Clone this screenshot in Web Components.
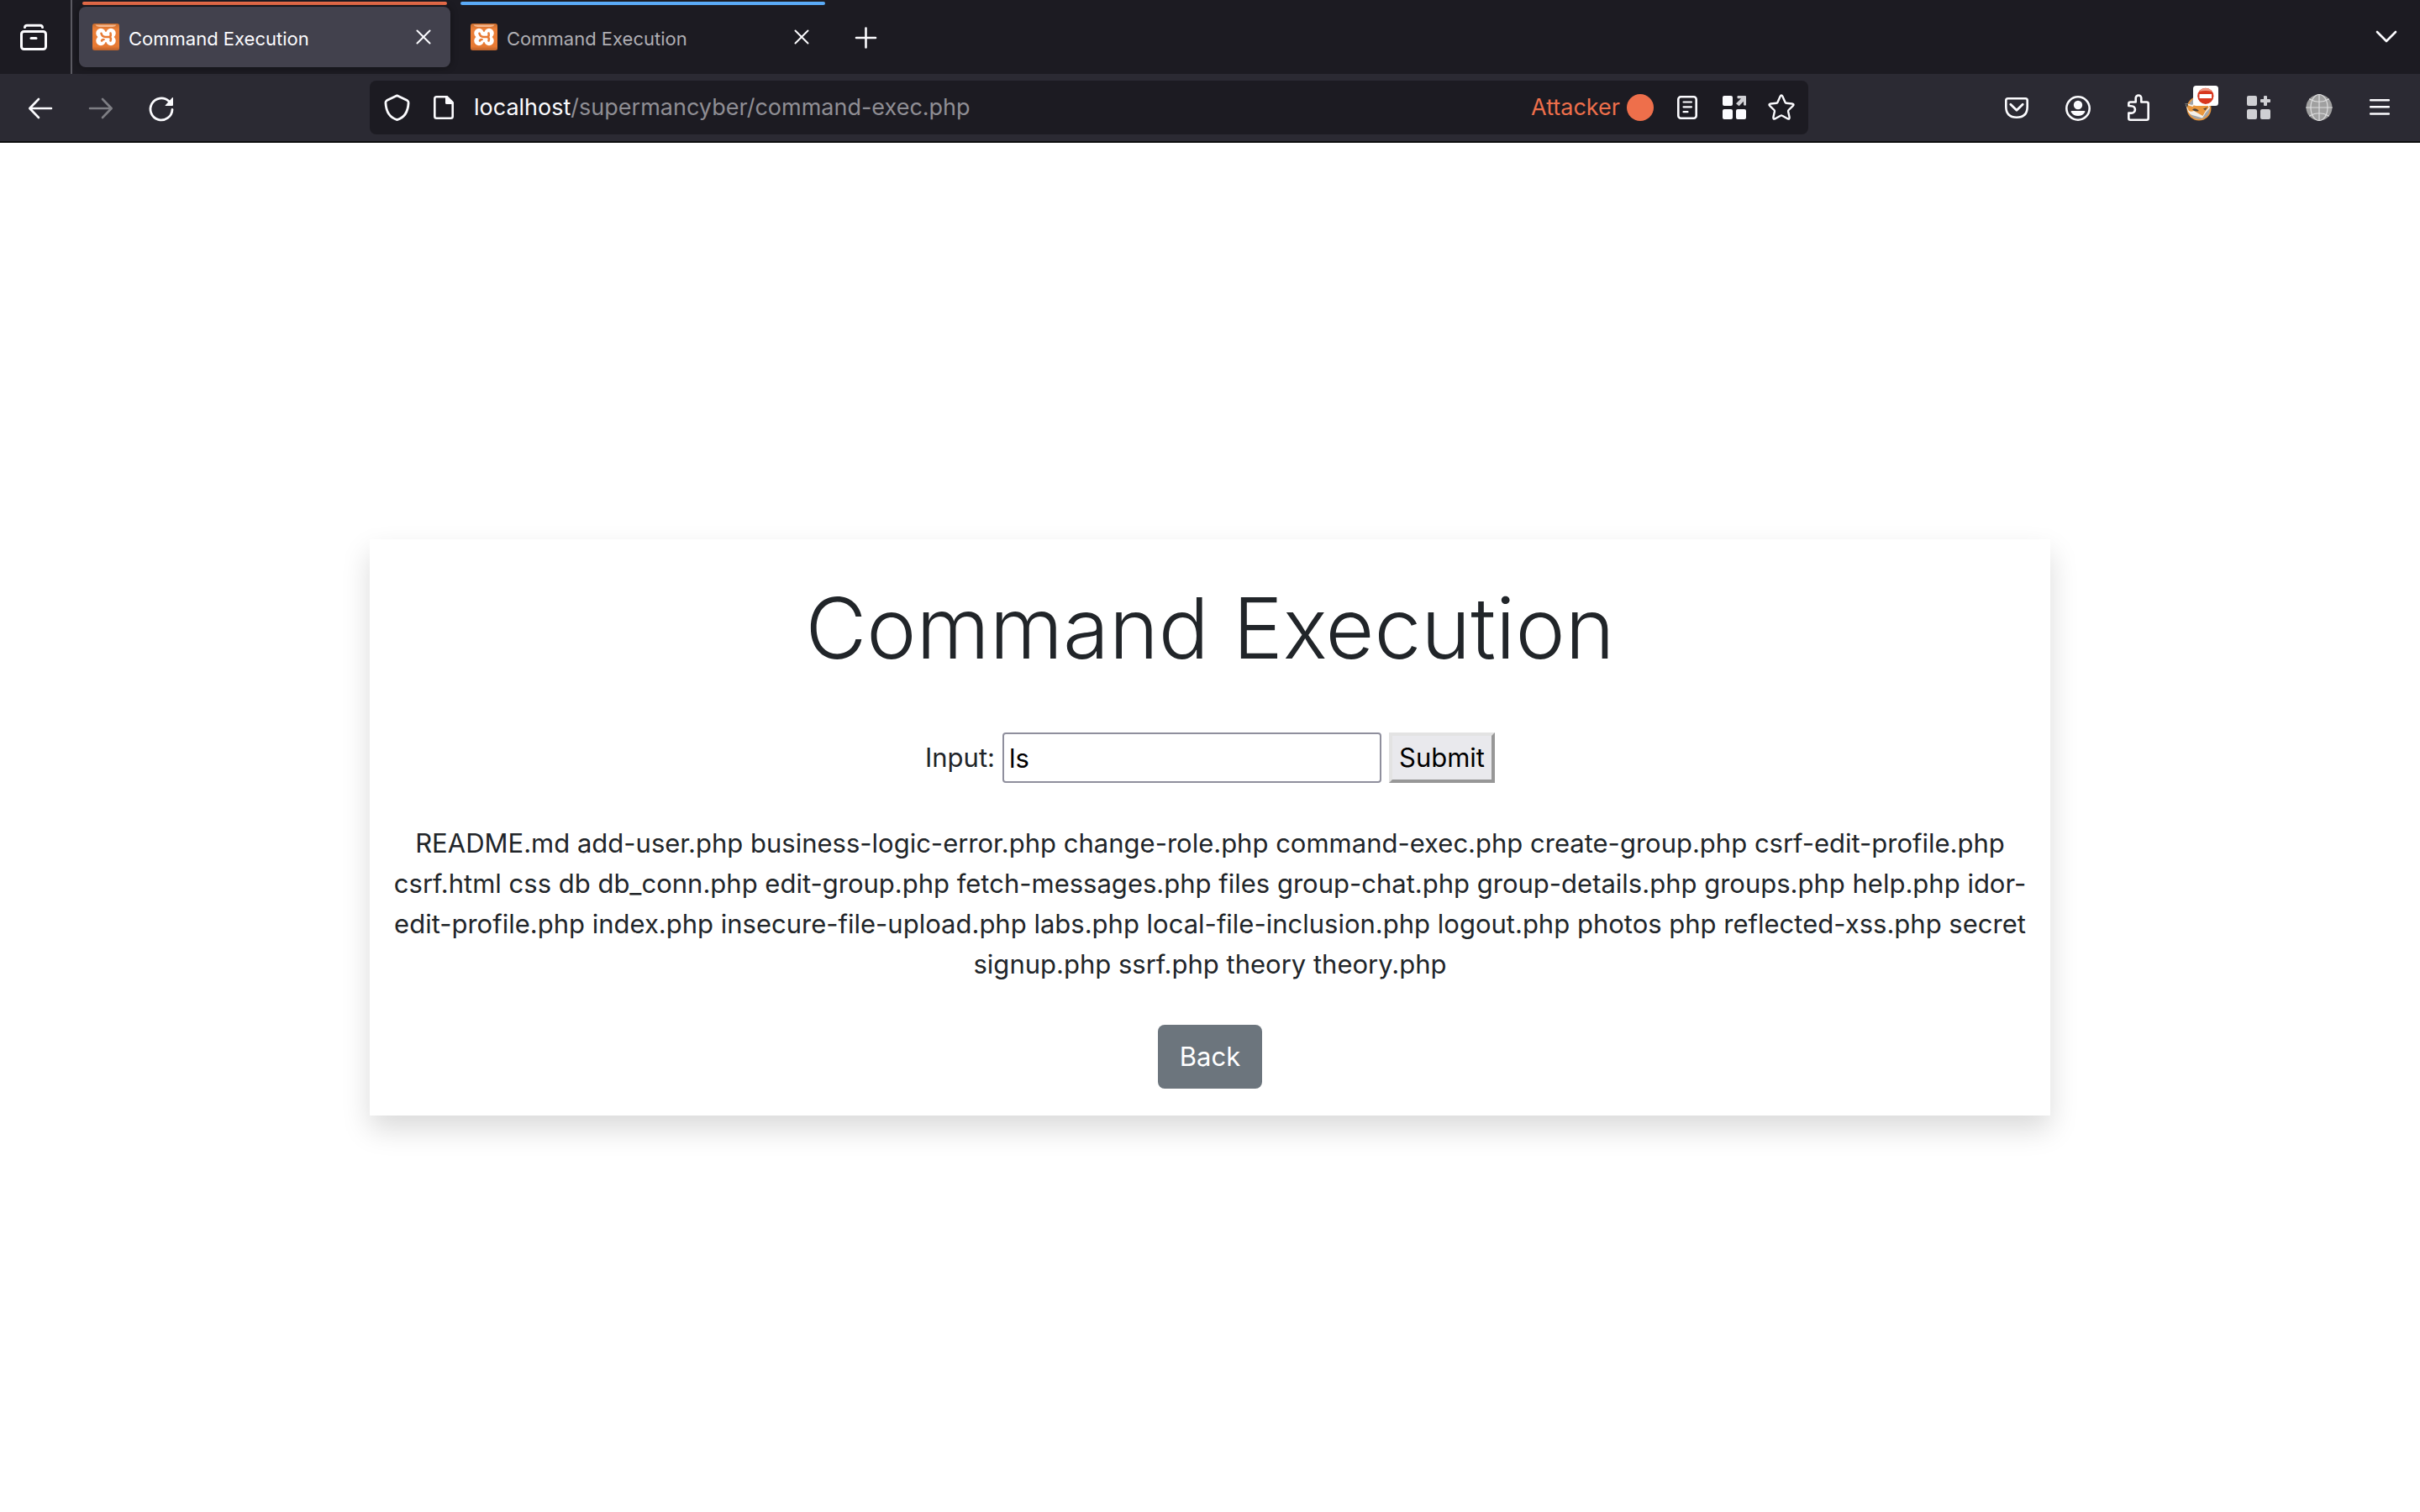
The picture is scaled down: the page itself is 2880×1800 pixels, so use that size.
<!DOCTYPE html>
<html lang="en">
<head>
<meta charset="utf-8">
<meta name="viewport" content="width=device-width, initial-scale=1">
<title>Command Execution</title>
<style>
  html, body { height: 100%; margin: 0; }
  body { font-family: Inter, "Liberation Sans", sans-serif; }
</style>
</head>
<body>
<browser-window>
  <tab-strip slot="chrome">
    <browser-tab active style="--container: #ee6f4b">Command Execution</browser-tab>
    <browser-tab style="--container: #5aabf7">Command Execution</browser-tab>
  </tab-strip>
  <nav-bar slot="chrome"></nav-bar>
  <command-card></command-card>
</browser-window>

<script>
const ICONS = {
  view: `<path d="M5.5 4.6Q5.8 2.2 8 2.2H24Q26.2 2.2 26.5 4.6" stroke-width="3"/><rect x="1.5" y="9.5" width="29" height="21" rx="3" stroke-width="3"/><path d="M13 17.5h6" stroke-width="3"/>`,
  plus: `<path d="M5 17H28M16.500 5.500V28.500" stroke-width="2.600"/>`,
  close: `<path d="M8.500 8.500 23.500 23.500M23.500 8.500 8.500 23.500" stroke-width="2"/>`,
  chevron: `<path d="M5 10 16 21 27 10" stroke-width="2.600"/>`,
  back: `<path d="M29 17H3.500M14 6 3.300 17 14 28" stroke-width="2.600"/>`,
  forward: `<path d="M3 17H28.500M18 6 28.700 17 18 28" stroke-width="2.600"/>`,
  reload: `<path d="M29 18.500A13 13 0 1 1 25 8.500" stroke-width="2.800"/><path d="M30 4.200V13Q30 14 29 14H21Q20 14 20.800 13.200L29.200 4Z" fill="currentColor" stroke="none"/>`,
  shield: `<path d="M16.500 1.800 28.600 7.600Q30.200 8.500 30.100 10.300C29.600 20.500 25.500 28 16.500 30.600C7.500 28 3.400 20.500 2.900 10.300Q2.800 8.500 4.400 7.600Z" stroke-width="2.800"/>`,
  page: `<path d="M18.500 3.300H7.500Q5.300 3.300 5.300 5.500V26.500Q5.300 28.700 7.500 28.700H24.500Q26.700 28.700 26.700 26.500V12" stroke-width="2.600"/><path d="M18 2H20.500L28 9.500V12H19.500Q18 12 18 10.500Z" fill="currentColor" stroke="none"/>`,
  reader: `<rect x="5.300" y="3.300" width="21.400" height="25.400" rx="3" stroke-width="2.600"/><path d="M11.500 9.500H21M11.500 15.300H21M11.500 21.200H16.500" stroke-width="2.200"/>`,
  gridArrow: `<g fill="currentColor" stroke="none"><rect x="2" y="2" width="12" height="12" rx="2"/><rect x="2" y="18" width="12" height="12" rx="2"/><rect x="18" y="18" width="12" height="12" rx="2"/><path d="M20 2H29Q30 2 30 3V13Q29 14.500 27 13V8.800L21.600 14.200 18 11.300 24 5.200H20Q18.500 3.500 20 2Z" fill="#cfcfd3"/></g>`,
  star: `<path d="M14.600 2.800Q16 0 17.400 2.800L20.500 9.700Q20.900 10.600 21.900 10.700L28.800 11.500Q31.800 12 29.600 14.200L24.600 19Q23.900 19.700 24.100 20.700L25.600 27.500Q26 30.500 23.300 29.200L17 25.700Q16 25.100 15 25.700L8.700 29.200Q6 30.500 6.400 27.500L7.900 20.700Q8.100 19.700 7.400 19L2.400 14.200Q.2 12 3.200 11.500L10.100 10.700Q11.100 10.600 11.500 9.700Z" stroke-width="2.400"/>`,
  pocket: `<path d="M5.500 5.300H26.500Q28.700 5.300 28.700 7.500V15Q28.700 27.700 16 27.700Q3.300 27.700 3.300 15V7.500Q3.300 5.300 5.500 5.300Z" stroke-width="2.600"/><path d="M8.800 12.300 16 19.300 23.200 12.300" stroke-width="2.800"/>`,
  account: `<circle cx="17" cy="17" r="13.700" stroke-width="2.600"/><g fill="currentColor" stroke="none"><circle cx="17" cy="13" r="5.200"/><path d="M9.500 20H24.500Q26 20 25.200 21.500Q22.500 26 17 26Q11.500 26 8.800 21.500Q8 20 9.500 20Z"/></g>`,
  puzzle: `<path d="M5.300 14V11.500Q5.300 9.500 7.300 9.500H13.700V4.800A3.300 3.300 0 0 1 20.300 4.800V9.500H26.700Q28.700 9.500 28.700 11.500V28.700Q28.700 30.700 26.700 30.700H7.300Q5.300 30.700 5.300 28.700V22.600H8.700A4.200 4.200 0 0 0 8.700 14.200Z" stroke-width="2.600"/>`,
  fox: `<g stroke="none"><circle cx="17" cy="17" r="14.500" fill="#e8963c"/><circle cx="17" cy="17" r="12.700" fill="#a3a5a8"/><path d="M.5 11 4 21Q6 24 9 25L21 28.500Q24 22 30 16.500L26 7H14L9 13Z" fill="#f5f1ea"/><path d="M1.500 12.500 9.500 15 15 8H26L28.500 16Q24 20.500 21.500 26L11 20Q5 22 4 18Z" fill="#ea973d"/><path d="M9 18.500Q13 15.500 17 20Q12.500 21.500 9 18.500Z" fill="#4a4038"/><path d="M.5 11 4 12.200 3 16Z" fill="#3c3935"/><path d="M22 17.500 27 15.500 24.500 19.500Z" fill="#5a493a"/><rect x="10" y="-10" width="30" height="24" rx="3.500" fill="#fff"/><circle cx="24.800" cy="2.300" r="9.600" fill="#d8371f"/><path d="M17 -3A9 8 0 0 1 32.600 -3Q25 -5 17 -3Z" fill="#ee9a85"/><rect x="17.500" y="0" width="14.600" height="5" rx=".5" fill="#fff"/></g>`,
  gridPlus: `<g fill="#cfcfd3" stroke="none"><rect x="2" y="2" width="12" height="12" rx="2"/><rect x="2" y="18" width="12" height="12" rx="2"/><rect x="18" y="18" width="12" height="12" rx="2"/><path d="M22 3Q22 2 23 2H25Q26 2 26 3V6H29Q30 6 30 7V9Q30 10 29 10H26V13Q26 14 25 14H23Q22 14 22 13V10H19Q18 10 18 9V7Q18 6 19 6H22Z"/></g>`,
  globe: `<circle cx="16" cy="16" r="15.500" fill="#a0a0a0" stroke="none"/><g stroke="#dededf" stroke-width="1.200"><path d="M.5 16H31.500M16 .5V31.500M4.500 6Q16 12.500 27.500 6M4.500 26Q16 19.500 27.500 26"/><ellipse cx="16" cy="16" rx="10" ry="15.500"/></g>`,
  menu: `<path d="M5.200 7.200H26.800M5.200 15.300H26.800M5.200 23.500H26.800" stroke-width="2.600"/>`,
  xampp: `<defs><linearGradient id="o" x1="0" y1="0" x2="0" y2="1"><stop offset="0" stop-color="#c56a2c"/><stop offset=".2" stop-color="#ea7f38"/><stop offset=".85" stop-color="#e87a33"/><stop offset="1" stop-color="#b9602a"/></linearGradient></defs><g stroke="none"><rect width="32" height="32" rx="2.500" fill="url(#o)"/><path d="M3.500 1.600H28.500Q27.500 4 24 4H8Q4.500 4 3.500 1.600Z" fill="#f4b78e"/><g fill="#fff"><circle cx="10" cy="11.500" r="5.700"/><circle cx="22" cy="11.500" r="5.700"/><circle cx="10" cy="20.500" r="5.700"/><circle cx="22" cy="20.500" r="5.700"/><rect x="7" y="10" width="18" height="12"/></g></g><path d="M10.500 11.800Q11.500 16 15.500 16H20M21.500 11.500Q22.500 16 19.500 16Q23 16.500 21.500 20.500M11 20.500Q11.500 19 13.500 19" stroke="#e87a33" stroke-width="2.600"/>`
};

const define = (name, css, markup) => customElements.define(name, class extends HTMLElement {
  constructor() {
    super();
    this.attachShadow({ mode: "open" }).innerHTML =
      `<style>:host,*{box-sizing:border-box}${css}</style>${markup}`;
  }
});

/* One glyph from the icon table */
customElements.define("ui-icon", class extends HTMLElement {
  connectedCallback() {
    if (this.shadowRoot) return;
    this.attachShadow({ mode: "open" }).innerHTML =
      `<style>:host{display:block;width:32px;height:32px;flex:none}svg{display:block;width:100%;height:100%;overflow:visible}</style>
       <svg viewBox="0 0 32 32" fill="none" stroke="currentColor" stroke-linecap="round" stroke-linejoin="round" aria-hidden="true">${ICONS[this.getAttribute("name")]}</svg>`;
  }
});

/* Toolbar button: icon name and accessible label come from attributes */
customElements.define("icon-button", class extends HTMLElement {
  connectedCallback() {
    if (this.shadowRoot) return;
    this.attachShadow({ mode: "open" }).innerHTML =
      `<style>
        :host{display:block;flex:none;width:72px;height:64px}
        :host([compact]){width:56px}
        :host([dim]){opacity:.4}
        button{display:grid;place-items:center;width:100%;height:100%;margin:0;padding:0;border:0;background:none;color:#fbfbfe}
      </style>
      <button type="button" aria-label="${this.getAttribute("label")}"><ui-icon name="${this.getAttribute("icon")}"></ui-icon></button>`;
  }
});

define("browser-tab", `
  :host{display:flex;flex-direction:column;flex:0 1 442px;min-width:0;height:88px;color:#afaeb3}
  :host([active]){color:#fbfbfe}
  .line{height:4px;flex:none;margin:2px 4px;border-radius:2px;background:var(--container)}
  .body{display:flex;align-items:center;gap:11px;height:72px;padding:0 8px 0 16px;border-radius:8px;font-size:22px;line-height:32px}
  :host([active]) .body{background:#42414d;box-shadow:0 0 8px rgba(0,0,0,.4)}
  .title{flex:1;padding-top:3px;white-space:nowrap;overflow:hidden}
  button{display:grid;place-items:center;width:48px;height:48px;padding:0;border:0;background:none;color:#fbfbfe}
`, `<div class="line"></div>
  <div class="body"><ui-icon name="xampp"></ui-icon><span class="title"><slot></slot></span>
  <button type="button" aria-label="Close tab"><ui-icon name="close"></ui-icon></button></div>`);

define("tab-strip", `
  :host{display:flex;align-items:center;height:88px;background:#1c1b22}
  .view{display:flex;width:86px;height:88px;align-items:center;border-right:2px solid #5b5a62;padding-left:4px}
  .tabs{display:flex;flex:1;gap:8px;min-width:0;padding-left:8px;align-items:center}
  .end{padding-right:4px}
`, `<div class="view"><icon-button icon="view" label="Firefox View"></icon-button></div>
  <div class="tabs"><slot></slot><icon-button icon="plus" label="New tab"></icon-button></div>
  <div class="end"><icon-button icon="chevron" label="List all tabs"></icon-button></div>`);

define("url-bar", `
  :host{display:flex;align-items:center;height:64px;padding:0 4px;border-radius:8px;background:#1c1b22;color:#fbfbfe;font-size:27px;line-height:40px}
  .url{flex:1;min-width:0;padding-left:8px;white-space:nowrap;overflow:hidden}
  .path{color:#8f8e94}
  .container{display:flex;align-items:center;gap:8px;margin-right:12px;color:#ee6f4b}
  .dot{width:32px;height:32px;border-radius:50%;background:currentColor}
`, `<icon-button compact icon="shield" label="Tracking protection"></icon-button>
  <icon-button compact icon="page" label="Site information"></icon-button>
  <div class="url" role="textbox" aria-label="Address">localhost<span class="path">/supermancyber/command-exec.php</span></div>
  <div class="container"><span>Attacker</span><span class="dot"></span></div>
  <icon-button compact icon="reader" label="Reader view"></icon-button>
  <icon-button compact icon="gridArrow" label="Open in container"></icon-button>
  <icon-button compact icon="star" label="Bookmark this page"></icon-button>`);

define("nav-bar", `
  :host{display:flex;align-items:center;height:82px;background:#2b2a33;border-bottom:2px solid #0c0c0d}
  .side{display:flex;padding:0 12px}
  .left{flex:0 0 440px}
  .right{flex:0 0 728px;justify-content:flex-end}
  url-bar{flex:1;min-width:0}
`, `<div class="side left">
    <icon-button icon="back" label="Back"></icon-button>
    <icon-button icon="forward" label="Forward" dim></icon-button>
    <icon-button icon="reload" label="Reload"></icon-button>
  </div>
  <url-bar></url-bar>
  <div class="side right">
    <icon-button icon="pocket" label="Save to Pocket"></icon-button>
    <icon-button icon="account" label="Account"></icon-button>
    <icon-button icon="puzzle" label="Extensions"></icon-button>
    <icon-button icon="fox" label="FoxyProxy"></icon-button>
    <icon-button icon="gridPlus" label="Containers"></icon-button>
    <icon-button icon="globe" label="Proxy"></icon-button>
    <icon-button icon="menu" label="Menu"></icon-button>
  </div>`);

define("command-card", `
  :host{display:block;width:100%;max-width:2000px;padding:32px 16px;background:#fff;box-shadow:0 16px 32px rgba(0,0,0,.15);
    color:#212529;font-size:31px;line-height:48px;text-align:center}
  h1{margin:0 0 50px;font-size:100px;font-weight:350;line-height:148px}
  form{display:flex;justify-content:center;align-items:center;gap:9px;margin:0 0 48px}
  input,.submit{height:60px;margin:0;font:inherit;color:#000}
  input{width:451px;padding:0 6px;border:2px solid #8f8f9d;border-radius:4px;background:#fff}
  .submit{padding:0 8px;border:4px solid;border-color:#e3e3e3 #979797 #979797 #e3e3e3;background:#e9e9ed}
  p{margin:0 0 48px}
  .back{display:block;width:fit-content;margin:0 auto;padding:14px 26px;border-radius:8px;background:#6c757d;color:#fff;text-decoration:none}
`, `<h1>Command Execution</h1>
  <form onsubmit="return false"><label for="cmd">Input:</label><input id="cmd" type="text" value="ls"><button class="submit" type="submit">Submit</button></form>
  <p>README.md add-user.php business-logic-error.php change-role.php command-exec.php create-group.php csrf-edit-profile.php csrf.html css db db_conn.php edit-group.php fetch-messages.php files group-chat.php group-details.php groups.php help.php idor-edit-profile.php index.php insecure-file-upload.php labs.php local-file-inclusion.php logout.php photos php reflected-xss.php secret signup.php ssrf.php theory theory.php</p>
  <a class="back" href="#">Back</a>`);

define("browser-window", `
  :host{display:flex;flex-direction:column;min-height:100%;background:#fff}
  main{flex:1;display:flex;align-items:center;justify-content:center;padding:0 16px}
`, `<header><slot name="chrome"></slot></header><main><slot></slot></main>`);
</script>
</body>
</html>
